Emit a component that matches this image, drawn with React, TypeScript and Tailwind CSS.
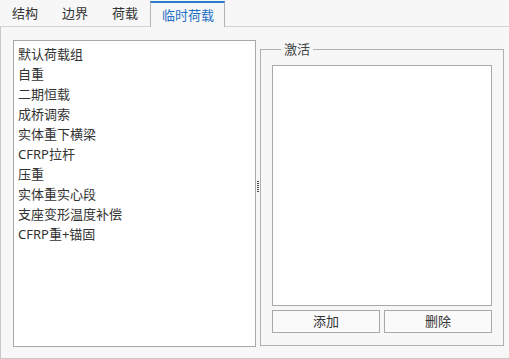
const tabs = ["结构", "边界", "荷载"];

const loads = [
  "默认荷载组",
  "自重",
  "二期恒载",
  "成桥调索",
  "实体重下横梁",
  "CFRP拉杆",
  "压重",
  "实体重实心段",
  "支座变形温度补偿",
  "CFRP重+锚固",
];

export default function App() {
  return (
    <div className="w-[509px] h-[359px] bg-[#f0f0f0] text-[13px] text-[#333] font-['Noto_Sans','Noto_Sans_CJK_SC',sans-serif] overflow-hidden">
      {/* Tab strip */}
      <div className="h-[27px] flex items-end border-b border-[#d4d4d4] bg-[#f7f7f7]">
        {tabs.map((t) => (
          <div key={t} className="w-[50px] h-[25px] pl-[12px] leading-[24px]">
            {t}
          </div>
        ))}
        <div className="relative -mb-px h-[26px] w-[75px] border-x border-[#b4b4b4] border-t-2 border-t-[#2b7bd0] bg-[#f7f7f7] pl-[11px] leading-[24px] text-[#1f6fc5]">
          临时荷载
        </div>
      </div>

      {/* Panel */}
      <div className="h-[332px] flex border-l border-b border-[#c8c8c8] bg-[#f7f7f7] pl-[12px] pt-[13px] pb-[11px]">
        <div className="w-[243px] h-[307px] border border-[#a8a8a8] bg-white pl-[4px] pt-[3px]">
          {loads.map((l) => (
            <div key={l} className="h-[20px] leading-[20px]">
              {l}
            </div>
          ))}
        </div>

        {/* Splitter */}
        <div className="w-[4px] flex items-center justify-center">
          <div className="flex flex-col gap-px mt-[-14px]">
            {[0, 1, 2, 3, 4, 5].map((i) => (
              <div key={i} className="w-[2px] h-px bg-[#444]" />
            ))}
          </div>
        </div>

        {/* Group box */}
        <fieldset className="w-[244px] h-[305px] mt-[1px] border border-[#b0b0b0] px-[11px] pb-[12px] flex flex-col">
          <legend className="ml-[9px] px-[3px] leading-[16px] text-[#444]">激活</legend>
          <div className="mt-[8px] h-[241px] border border-[#a8a8a8] bg-white" />
          <div className="mt-[4px] flex gap-[4px]">
            <button className="w-[108px] h-[23px] border border-[#a8a8a8] bg-[#fafafa] leading-[21px]">
              添加
            </button>
            <button className="w-[108px] h-[23px] border border-[#a8a8a8] bg-[#fafafa] leading-[21px]">
              删除
            </button>
          </div>
        </fieldset>
      </div>
    </div>
  );
}
